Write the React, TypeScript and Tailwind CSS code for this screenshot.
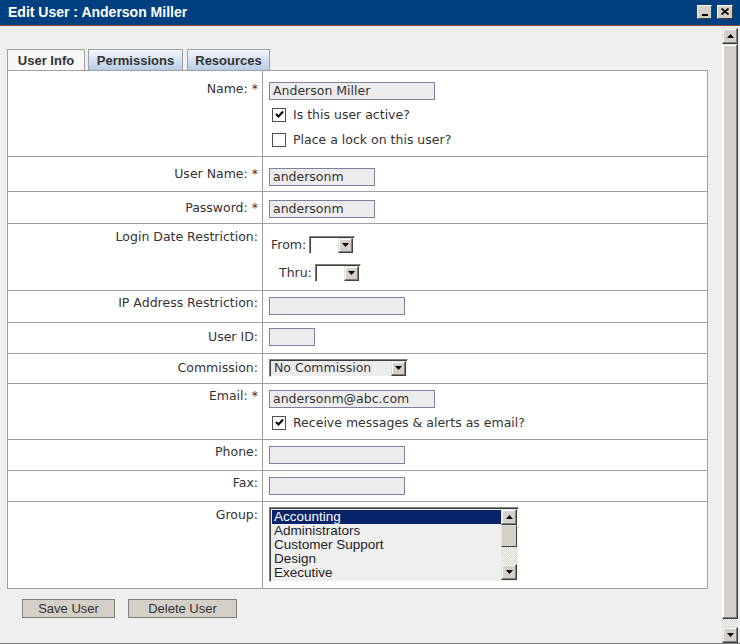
import type { ReactNode } from 'react'

const label = "font-['DejaVu_Sans',sans-serif] text-[12.5px] leading-[16px] text-[#333]"

function Tri({ up = false }: { up?: boolean }) {
  return (
    <svg width="7" height="4" viewBox="0 0 7 4" className="block">
      {up ? <path d="M3.5 0 L7 4 L0 4 Z" fill="#000" /> : <path d="M0 0 L7 0 L3.5 4 Z" fill="#000" />}
    </svg>
  )
}

function ArrowBtn({ up = false, className = 'w-[16px] h-[16px]' }: { up?: boolean; className?: string }) {
  return (
    <div
      className={`${className} flex items-center justify-center bg-[#d4d0c8] border border-t-[#dfdfdf] border-l-[#dfdfdf] border-r-[#404040] border-b-[#404040] shadow-[inset_-1px_-1px_#808080,inset_1px_1px_#fff]`}
    >
      <Tri up={up} />
    </div>
  )
}

function TextBox({ w, value = '' }: { w: string; value?: string }) {
  return (
    <div className={`${w} h-[18px] border border-[#7f7f9f] bg-[#ececec] pl-[3px] ${label} whitespace-nowrap`}>
      {value}
    </div>
  )
}

function Check({ checked, text }: { checked: boolean; text: string }) {
  return (
    <div className="flex items-center h-[25px] gap-[7px] pl-[3px]">
      <div className="w-[14px] h-[14px] border border-[#505050] bg-white flex items-center justify-center">
        {checked && (
          <svg width="9" height="9" viewBox="0 0 9 9">
            <path d="M1 4 L3.5 6.5 L8 1.5" stroke="#000" strokeWidth="2" fill="none" />
          </svg>
        )}
      </div>
      <span className={label}>{text}</span>
    </div>
  )
}

function Dropdown({ w, text = '', bg = 'bg-white' }: { w: string; text?: string; bg?: string }) {
  return (
    <div
      className={`${w} h-[18px] flex items-center ${bg} border border-t-[#808080] border-l-[#808080] border-r-[#fff] border-b-[#fff] shadow-[inset_1px_1px_#404040]`}
    >
      <span className={`flex-1 pl-[4px] ${label} whitespace-nowrap`}>{text}</span>
      <ArrowBtn className="w-[15px] h-[15px] mr-[1px]" />
    </div>
  )
}

function Row({
  name,
  h,
  lpt,
  vpt,
  first = false,
  children,
}: {
  name: string
  h: string
  lpt: string
  vpt: string
  first?: boolean
  children?: ReactNode
}) {
  return (
    <div className={`flex ${h} ${first ? '' : 'border-t border-[#a0a0a0]'}`}>
      <div className={`w-[255px] shrink-0 border-r border-[#a0a0a0] text-right pr-[4px] ${lpt} ${label}`}>{name}</div>
      <div className={`flex-1 pl-[6px] ${vpt}`}>{children}</div>
    </div>
  )
}

const groups = ['Accounting', 'Administrators', 'Customer Support', 'Design', 'Executive']

export default function App() {
  return (
    <div className="w-[740px] h-[644px] flex flex-col bg-[#efefef] border-b border-[#808080] overflow-hidden">
      {/* title bar */}
      <div className="h-[26px] shrink-0 bg-[#004080] border-b border-[#8a4a3a] flex items-center justify-between pl-[8px] pr-[7px]">
        <span className="font-['Liberation_Sans',sans-serif] font-bold text-[14px] text-white">Edit User : Anderson Miller</span>
        <div className="flex gap-[5px] -mt-[2px]">
          <div className="w-[15px] h-[14px] bg-[#d4d0c8] border border-t-white border-l-white border-r-[#404040] border-b-[#404040] flex items-end justify-center pb-[2px]">
            <div className="w-[6px] h-[2px] bg-black" />
          </div>
          <div className="w-[16px] h-[14px] bg-[#d4d0c8] border border-t-white border-l-white border-r-[#404040] border-b-[#404040] flex items-center justify-center">
            <svg width="8" height="7" viewBox="0 0 8 7">
              <path d="M0.5 0.5 L7.5 6.5 M7.5 0.5 L0.5 6.5" stroke="#000" strokeWidth="1.6" />
            </svg>
          </div>
        </div>
      </div>

      <div className="flex flex-1 min-h-0">
        <div className="w-[722px] pl-[7px] pt-[23px]">
          {/* tabs */}
          <div className="flex items-end h-[21px] gap-[3px] font-['Liberation_Sans',sans-serif] font-bold text-[13px] text-[#333]">
            <div className="w-[78px] h-[21px] border border-b-0 border-[#a0a0a0] bg-[#f7f7f7] flex items-center justify-center pt-[2px]">User Info</div>
            <div className="w-[95px] h-[21px] border border-b-0 border-[#a0a0a0] bg-gradient-to-b from-[#f2f6fb] to-[#b8cde6] flex items-center justify-center pt-[2px]">Permissions</div>
            <div className="w-[83px] h-[21px] ml-[1px] border border-b-0 border-[#a0a0a0] bg-gradient-to-b from-[#f2f6fb] to-[#b8cde6] flex items-center justify-center pt-[2px]">Resources</div>
          </div>

          {/* form table */}
          <div className="w-[701px] border border-[#a0a0a0] bg-white">
            <Row name="Name: *" h="h-[85px]" lpt="pt-[10px]" vpt="pt-[11px]" first>
              <TextBox w="w-[166px]" value="Anderson Miller" />
              <div className="mt-[2px]">
                <Check checked text="Is this user active?" />
                <Check checked={false} text="Place a lock on this user?" />
              </div>
            </Row>
            <Row name="User Name: *" h="h-[35px]" lpt="pt-[9px]" vpt="pt-[11px]">
              <TextBox w="w-[106px]" value="andersonm" />
            </Row>
            <Row name="Password: *" h="h-[32px]" lpt="pt-[8px]" vpt="pt-[8px]">
              <TextBox w="w-[106px]" value="andersonm" />
            </Row>
            <Row name="Login Date Restriction:" h="h-[67px]" lpt="pt-[5px]" vpt="pt-[12px]">
              <div className="flex items-center gap-[3px] pl-[2px]">
                <span className={label}>From:</span>
                <Dropdown w="w-[46px]" />
              </div>
              <div className="flex items-center gap-[3px] pl-[10px] mt-[10px]">
                <span className={label}>Thru:</span>
                <Dropdown w="w-[46px]" />
              </div>
            </Row>
            <Row name="IP Address Restriction:" h="h-[32px]" lpt="pt-[4px]" vpt="pt-[6px]">
              <TextBox w="w-[136px]" />
            </Row>
            <Row name="User ID:" h="h-[31px]" lpt="pt-[6px]" vpt="pt-[5px]">
              <TextBox w="w-[46px]" />
            </Row>
            <Row name="Commission:" h="h-[30px]" lpt="pt-[6px]" vpt="pt-[5px]">
              <Dropdown w="w-[139px]" text="No Commission" bg="bg-[#ececec]" />
            </Row>
            <Row name="Email: *" h="h-[56px]" lpt="pt-[4px]" vpt="pt-[6px]">
              <TextBox w="w-[166px]" value="andersonm@abc.com" />
              <div className="mt-[2px]">
                <Check checked text="Receive messages & alerts as email?" />
              </div>
            </Row>
            <Row name="Phone:" h="h-[31px]" lpt="pt-[4px]" vpt="pt-[6px]">
              <TextBox w="w-[136px]" />
            </Row>
            <Row name="Fax:" h="h-[31px]" lpt="pt-[4px]" vpt="pt-[6px]">
              <TextBox w="w-[136px]" />
            </Row>
            <Row name="Group:" h="h-[87px]" lpt="pt-[5px]" vpt="pt-[5px]">
              <div className="w-[250px] h-[75px] flex border border-t-[#808080] border-l-[#808080] border-r-white border-b-white shadow-[inset_1px_1px_#404040] bg-[#efefef]">
                <div className="flex-1 pl-[2px] pt-[2px] font-['Liberation_Sans',sans-serif] text-[13.5px] leading-[14px] text-[#222]">
                  {groups.map((g, i) => (
                    <div key={g} className={`pl-[2px] h-[14px] ${i === 0 ? 'bg-[#0a246a] text-white' : ''}`}>
                      {g}
                    </div>
                  ))}
                </div>
                <div className="w-[16px] mt-[1px] mr-[1px] mb-[1px] flex flex-col">
                  <ArrowBtn up />
                  <div className="h-[22px] bg-[#d4d0c8] border border-t-[#dfdfdf] border-l-[#dfdfdf] border-r-[#404040] border-b-[#404040]" />
                  <div className="flex-1 bg-[repeating-conic-gradient(#d4d0c8_0_25%,#ffffff_0_50%)] bg-[length:2px_2px]" />
                  <ArrowBtn />
                </div>
              </div>
            </Row>
          </div>

          {/* buttons */}
          <div className="flex gap-[13px] pl-[15px] mt-[10px] font-['Liberation_Sans',sans-serif] text-[13px] text-[#333]">
            <div className="w-[93px] h-[19px] bg-[#d4d0c8] border border-[#808080] flex items-center justify-center">Save User</div>
            <div className="w-[109px] h-[19px] bg-[#d4d0c8] border border-[#808080] flex items-center justify-center">Delete User</div>
          </div>
        </div>

        {/* page scrollbar */}
        <div className="w-[16px] mt-[2px] flex flex-col">
          <ArrowBtn up />
          <div className="flex-1 bg-[#d4d0c8] border border-t-[#dfdfdf] border-l-white border-r-[#404040] border-b-[#404040] shadow-[inset_-1px_-1px_#808080,inset_1px_1px_#fff]" />
          <div className="h-[8px] bg-[repeating-conic-gradient(#d4d0c8_0_25%,#ffffff_0_50%)] bg-[length:2px_2px]" />
          <ArrowBtn />
        </div>
      </div>
    </div>
  )
}
